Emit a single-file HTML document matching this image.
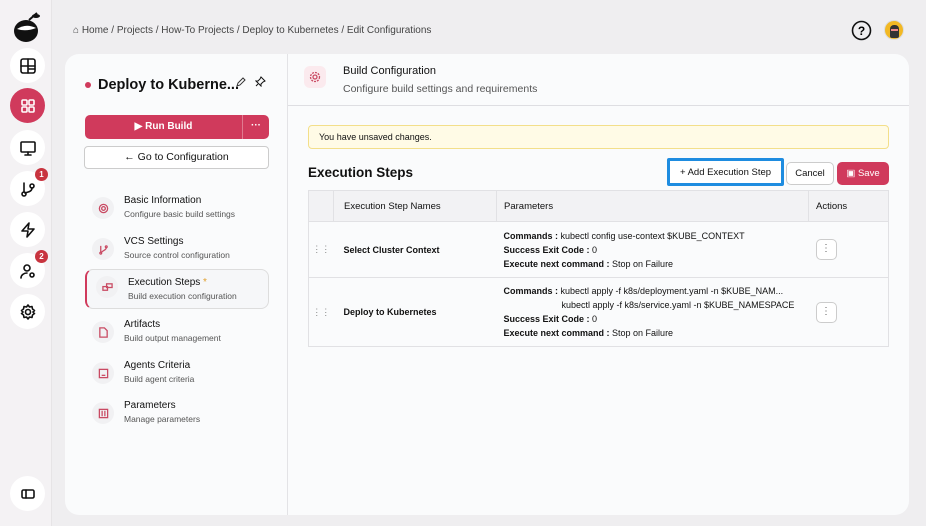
<!DOCTYPE html><html><head><meta charset="utf-8"><style>
*{box-sizing:border-box;margin:0;padding:0}
body{width:926px;height:526px;background:#efeef0;font-family:"Liberation Sans",sans-serif;position:relative;overflow:hidden;color:#111}
.rail{position:absolute;left:0;top:0;width:52px;height:526px;background:#f4f2f4;border-right:1px solid #e6e4e6}
.ri{position:absolute;left:10px;width:35px;height:35px;border-radius:50%;background:#fff;display:flex;align-items:center;justify-content:center}
.ri svg{width:18px;height:18px;fill:none;stroke:#111;stroke-width:1.6;stroke-linecap:round;stroke-linejoin:round}
.badge{position:absolute;right:-3px;top:-3px;width:13px;height:13px;border-radius:50%;background:#c8343f;color:#fff;font-size:8px;font-weight:bold;display:flex;align-items:center;justify-content:center}
.crumb{position:absolute;left:73px;top:25px;font-size:10px;color:#444}
.card{position:absolute;left:65px;top:54px;width:844px;height:461px;background:#fafbfc;border-radius:14px;overflow:hidden}
.left{position:absolute;left:0;top:0;width:223px;height:461px;border-right:1px solid #e3e3e6}
.title{position:absolute;left:20px;top:23px;font-size:14.5px;font-weight:bold;display:flex;align-items:center}
.title:before{content:"";width:6px;height:6px;border-radius:50%;background:#d03a5c;margin-right:7px}
.run{position:absolute;left:20px;top:61px;width:184px;height:24px;background:#d03a5c;border-radius:5px;color:#fff;font-size:10px;font-weight:bold}
.go{position:absolute;left:19px;top:92px;width:185px;height:23px;border:1px solid #ccc;border-radius:4px;background:#fff;font-size:10.5px;text-align:center;line-height:21px}
.item{position:absolute;left:20px;width:184px;height:38px}
.item .ic{position:absolute;left:7px;top:6px;width:22px;height:22px;border-radius:50%;background:#f1f1f3;display:flex;align-items:center;justify-content:center}
.item .ic svg{width:11px;height:11px;fill:none;stroke:#c94a63;stroke-width:1.4}
.item b{position:absolute;left:39px;top:4px;font-size:10px;font-weight:normal;color:#111}
.item i{position:absolute;left:39px;top:18px;font-size:8.5px;font-style:normal;color:#555}
.sel{border:1px solid #ddd;border-left:2px solid #d03a5c;border-radius:8px;background:#f6f7f9}
.hdr{position:absolute;left:223px;top:0;width:621px;height:52px;border-bottom:1px solid #dedee2}
.warn{position:absolute;left:243px;top:71px;width:581px;height:24px;background:#fffbe6;border:1px solid #f3df8a;border-radius:4px;font-size:9px;line-height:22px;padding-left:10px}
.btn{position:absolute;top:108px;height:23px;border:1px solid #ccc;border-radius:5px;background:#fff;font-size:9.5px;display:flex;align-items:center;justify-content:center}
table{position:absolute;left:243px;top:136px;width:581px;border-collapse:collapse;border:1px solid #e1e1e4;font-size:9px}
th{background:#f2f2f4;height:31px;text-align:left;font-weight:normal;border-bottom:1px solid #e1e1e4;font-size:9.5px}
td{border-bottom:1px solid #e1e1e4;vertical-align:middle}
.p{line-height:14px}
.dots{width:21px;height:21px;border:1px solid #ccc;border-radius:5px;background:#fff;margin-left:7px;font-size:10px;color:#666;text-align:center;line-height:18px}
</style></head><body>
<div class="rail">
<svg style="position:absolute;left:12px;top:10px" width="30" height="34" viewBox="0 0 30 34"><ellipse cx="14" cy="21" rx="12" ry="11" fill="#111"/><path d="M5 19 Q14 13 24 18 Q14 22 5 19Z" fill="#fff"/><path d="M17 10 L25 3" stroke="#111" stroke-width="2"/><ellipse cx="24" cy="6" rx="4" ry="2" fill="#111"/></svg>
<div class="ri" style="top:48px"><svg viewBox="0 0 18 18"><rect x="2" y="2" width="14" height="14" rx="2"/><path d="M2 9h14M9 2v14M9 12h7"/></svg></div>
<div class="ri" style="top:88px;background:#d03a5c"><svg viewBox="0 0 18 18" style="stroke:#fff"><rect x="3" y="3" width="5" height="5" rx="1"/><rect x="10" y="3" width="5" height="5" rx="1"/><rect x="3" y="10" width="5" height="5" rx="1"/><rect x="10" y="10" width="5" height="5" rx="1"/></svg></div>
<div class="ri" style="top:130px"><svg viewBox="0 0 18 18"><rect x="2" y="3" width="14" height="10" rx="1"/><path d="M9 13v3M6 16h6"/></svg></div>
<div class="ri" style="top:171px"><svg viewBox="0 0 18 18"><circle cx="5" cy="14" r="2"/><circle cx="13" cy="6" r="2"/><path d="M5 12V3M13 8c0 4-5 4-7 5"/></svg><div class="badge">1</div></div>
<div class="ri" style="top:212px"><svg viewBox="0 0 18 18"><path d="M10 2L3 10h6l-1 6 7-8H9z"/></svg></div>
<div class="ri" style="top:253px"><svg viewBox="0 0 18 18"><circle cx="8" cy="6" r="3"/><path d="M2 16c0-3 3-5 6-5"/><circle cx="13" cy="13" r="2"/></svg><div class="badge">2</div></div>
<div class="ri" style="top:294px"><svg viewBox="0 0 18 18"><circle cx="9" cy="9" r="2.5"/><path d="M9 2l1.5 2 2.5-.5.5 2.5 2 1.5-1.5 1.5 1.5 1.5-2 1.5-.5 2.5-2.5-.5L9 16l-1.5-2-2.5.5-.5-2.5-2-1.5L4 9 2.5 7.5l2-1.5.5-2.5 2.5.5z"/></svg></div>
<div class="ri" style="top:476px"><svg viewBox="0 0 18 18"><rect x="3" y="5" width="12" height="8" rx="1.5"/><path d="M7 5v8"/></svg></div>
</div>
<div class="crumb">⌂ Home / Projects / How-To Projects / Deploy to Kubernetes / Edit Configurations</div>
<svg style="position:absolute;left:851px;top:20px" width="21" height="21" viewBox="0 0 21 21"><circle cx="10.5" cy="10.5" r="9" fill="none" stroke="#111" stroke-width="1.6"/><text x="10.5" y="15" font-size="12" text-anchor="middle" font-family="Liberation Sans" font-weight="bold">?</text></svg>
<div style="position:absolute;left:884px;top:20px;width:20px;height:20px;border-radius:50%;background:#f2b824;border:1px solid #ddd"><div style="position:absolute;left:5px;top:4px;width:9px;height:13px;background:#333;border-radius:4px 4px 2px 2px"></div><div style="position:absolute;left:6px;top:8px;width:7px;height:2px;background:#e88"></div></div>
<div class="card">
<div class="left">
<div class="title">Deploy to Kuberne...</div>
<svg style="position:absolute;left:171px;top:23px" width="10" height="10" viewBox="0 0 10 10"><path d="M1 9l1-3 5-5 2 2-5 5z" fill="none" stroke="#333"/></svg>
<svg style="position:absolute;left:190px;top:22px" width="11" height="11" viewBox="0 0 11 11"><path d="M6 1l4 4-2 1-2 2v2L1 5h2l2-2z M3 8L1 10" fill="none" stroke="#111"/></svg>
<div class="run"><span style="position:absolute;left:0;width:157px;text-align:center;line-height:24px">▶ Run Build</span><span style="position:absolute;left:157px;top:0;width:1px;height:24px;background:#e07a90"></span><span style="position:absolute;left:158px;width:26px;text-align:center;line-height:22px">···</span></div>
<div class="go">← Go to Configuration</div>
<div class="item" style="top:137px"><div class="ic"><svg viewBox="0 0 12 12"><circle cx="6" cy="6" r="2"/><circle cx="6" cy="6" r="4.5"/></svg></div><b>Basic Information</b><i>Configure basic build settings</i></div>
<div class="item" style="top:178px"><div class="ic"><svg viewBox="0 0 12 12"><circle cx="3" cy="10" r="1"/><circle cx="9" cy="3" r="1"/><path d="M3 2v7M9 4c0 3-4 3-5 5"/></svg></div><b>VCS Settings</b><i>Source control configuration</i></div>
<div class="item sel" style="top:215px;height:40px"><div class="ic" style="left:9px"><svg viewBox="0 0 12 12"><rect x="1" y="5" width="5" height="4"/><rect x="5" y="2" width="6" height="4"/></svg></div><b style="left:41px;top:7px">Execution Steps <span style="color:#e0a030">*</span></b><i style="left:41px;top:21px">Build execution configuration</i></div>
<div class="item" style="top:261px"><div class="ic"><svg viewBox="0 0 12 12"><path d="M2 1h5l3 3v7H2z"/></svg></div><b>Artifacts</b><i>Build output management</i></div>
<div class="item" style="top:302px"><div class="ic"><svg viewBox="0 0 12 12"><rect x="1.5" y="1.5" width="9" height="9"/><path d="M4 8h4"/></svg></div><b>Agents Criteria</b><i>Build agent criteria</i></div>
<div class="item" style="top:342px"><div class="ic"><svg viewBox="0 0 12 12"><rect x="1.5" y="1.5" width="9" height="9"/><path d="M4.5 3v6M7.5 3v6"/></svg></div><b>Parameters</b><i>Manage parameters</i></div>
</div>
<div class="hdr">
<div style="position:absolute;left:16px;top:12px;width:22px;height:22px;border-radius:6px;background:#fbeaee;display:flex;align-items:center;justify-content:center"><svg width="12" height="12" viewBox="0 0 12 12" fill="none" stroke="#c94a63" stroke-width="1.3"><circle cx="6" cy="6" r="2"/><circle cx="6" cy="6" r="4.5" stroke-dasharray="2 1"/></svg></div>
<div style="position:absolute;left:55px;top:11px;font-size:11px">Build Configuration</div>
<div style="position:absolute;left:55px;top:29px;font-size:10.5px;color:#555">Configure build settings and requirements</div>
</div>
<div class="warn">You have unsaved changes.</div>
<div style="position:absolute;left:243px;top:111px;font-size:13.5px;font-weight:bold">Execution Steps</div>
<div class="btn" style="left:602px;top:104px;width:117px;height:28px;border:3px solid #1e8ce0;border-radius:2px">+ Add Execution Step</div>
<div class="btn" style="left:721px;width:48px">Cancel</div>
<div class="btn" style="left:772px;width:52px;background:#d03a5c;border-color:#d03a5c;color:#fff">▣ Save</div>
<table>
<tr><th style="width:25px"></th><th style="width:163px;padding-left:10px;border-left:1px solid #e1e1e4">Execution Step Names</th><th style="width:312px;padding-left:7px;border-left:1px solid #e1e1e4">Parameters</th><th style="padding-left:7px;border-left:1px solid #e1e1e4">Actions</th></tr>
<tr style="height:56px"><td style="text-align:center;color:#888">⋮⋮</td><td style="padding-left:10px;font-weight:bold">Select Cluster Context</td><td class="p" style="padding-left:7px"><b>Commands :</b> kubectl config use-context $KUBE_CONTEXT<br><b>Success Exit Code :</b> 0<br><b>Execute next command :</b> Stop on Failure</td><td><div class="dots">⋮</div></td></tr>
<tr style="height:69px"><td style="text-align:center;color:#888">⋮⋮</td><td style="padding-left:10px;font-weight:bold">Deploy to Kubernetes</td><td class="p" style="padding-left:7px;white-space:nowrap"><b>Commands :</b> kubectl apply -f k8s/deployment.yaml -n $KUBE_NAM...<br><span style="padding-left:58px">kubectl apply -f k8s/service.yaml -n $KUBE_NAMESPACE</span><br><b>Success Exit Code :</b> 0<br><b>Execute next command :</b> Stop on Failure</td><td><div class="dots">⋮</div></td></tr>
</table>
</div>
</body></html>
